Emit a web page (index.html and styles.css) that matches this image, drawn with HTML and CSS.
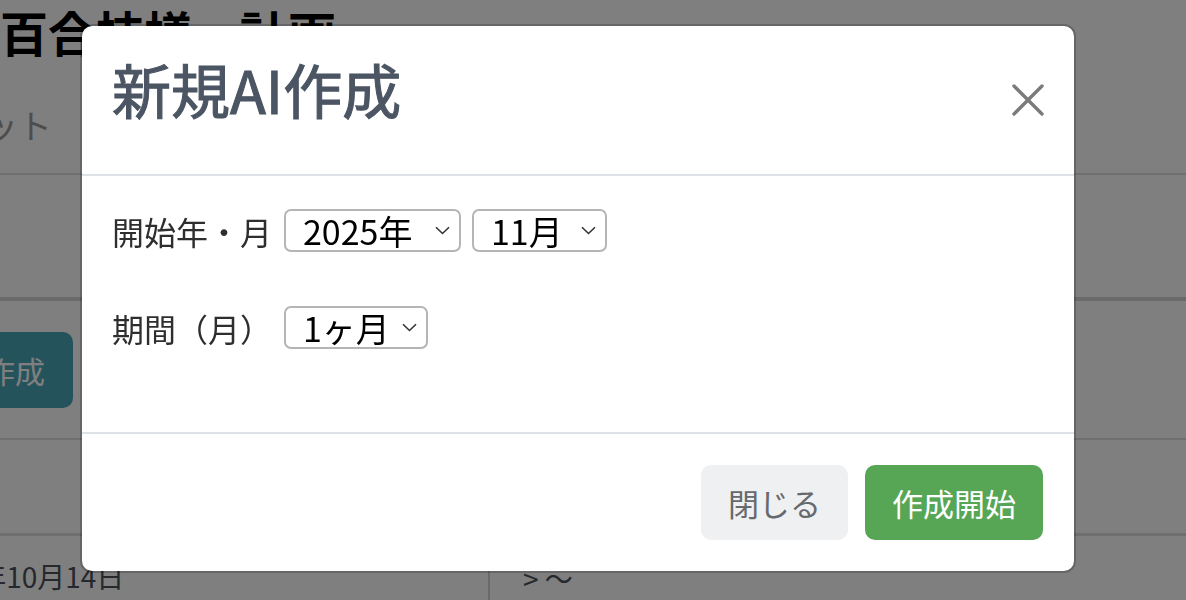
FILE: index.html
```html
<!DOCTYPE html>
<html lang="ja">
<head>
<meta charset="utf-8">
<title>新規AI作成</title>
<link rel="stylesheet" href="styles.css">
</head>
<body>
<div class="page">
  <header class="page-header">
    <h1 class="page-title">百合技様 – 計画</h1>
    <div class="page-sub">ット</div>
  </header>
  <section class="page-tabs"></section>
  <div class="page-actions">
    <button class="btn-teal" type="button">作成</button>
  </div>
  <div class="page-row"></div>
  <div class="page-row page-row-date">
    <div class="cell-date">2025年10月14日</div>
    <div class="cell-range">&gt; 〜</div>
  </div>
</div>

<div class="backdrop"></div>

<div class="modal" role="dialog" aria-labelledby="modal-title">
  <div class="modal-header">
    <h5 class="modal-title" id="modal-title">新規AI作成</h5>
    <button class="modal-close" type="button" aria-label="閉じる">
      <svg width="32" height="32" viewBox="0 0 32 32">
        <path d="M2 2 L30 30 M30 2 L2 30" stroke="#7b7b7b" stroke-width="3.4" stroke-linecap="round" fill="none"/>
      </svg>
    </button>
  </div>
  <div class="modal-body">
    <div class="form-row">
      <span class="form-label">開始年・月</span>
      <div class="select select-year"><span>2025年</span>
        <svg class="chev" width="15" height="9" viewBox="0 0 15 9"><path d="M1 1.2 L7.5 7.5 L14 1.2" stroke="#333" stroke-width="1.6" fill="none"/></svg>
      </div>
      <div class="select select-month"><span>11月</span>
        <svg class="chev" width="15" height="9" viewBox="0 0 15 9"><path d="M1 1.2 L7.5 7.5 L14 1.2" stroke="#333" stroke-width="1.6" fill="none"/></svg>
      </div>
    </div>
    <div class="form-row">
      <span class="form-label">期間（月）</span>
      <div class="select select-period"><span>1ヶ月</span>
        <svg class="chev" width="15" height="9" viewBox="0 0 15 9"><path d="M1 1.2 L7.5 7.5 L14 1.2" stroke="#333" stroke-width="1.6" fill="none"/></svg>
      </div>
    </div>
  </div>
  <div class="modal-footer">
    <button class="btn btn-secondary" type="button">閉じる</button>
    <button class="btn btn-primary" type="button">作成開始</button>
  </div>
</div>
</body>
</html>
```

FILE: styles.css
```css
html, body {
  margin: 0;
  padding: 0;
}

body {
  width: 1186px;
  height: 600px;
  overflow: hidden;
  background: #ffffff;
  font-family: "Noto Sans CJK JP", "Noto Sans", sans-serif;
  color: #212529;
}

/* ---------- background page ---------- */
.page {
  width: 1186px;
  overflow: hidden;
}

.page-header {
  height: 173px;
  border-bottom: 2px solid #dedede;
  box-sizing: content-box;
}

.page-title {
  margin: 0;
  font-size: 48px;
  font-weight: 700;
  line-height: 62px;
  color: #000;
  white-space: nowrap;
}

.page-sub {
  margin-top: 43px;
  margin-left: -16px;
  font-size: 34px;
  line-height: 40px;
  color: #9b9b9b;
}

.page-tabs {
  height: 122px;
  border-bottom: 4px solid #d4d4d4;
}

.page-actions {
  padding: 31px 0 30px;
  border-bottom: 2px solid #dedede;
}

.btn-teal {
  display: block;
  height: 76px;
  margin-left: -43px;
  padding: 0 28px;
  border: none;
  border-radius: 10px;
  background: #4aa6b8;
  color: #ffffff;
  font-family: inherit;
  font-size: 30px;
}

.page-row {
  height: 93px;
  border-bottom: 3px solid #dedede;
}

.page-row-date {
  display: flex;
  height: 64px;
  border-bottom: none;
}

.cell-date {
  width: 572px;
  margin-left: -84px;
  padding-top: 20px;
  font-size: 28px;
  line-height: 40px;
  color: #4a5058;
  white-space: nowrap;
}

.cell-range {
  border-left: 2px solid #d4d4d4;
  padding: 22px 0 0 33px;
  font-size: 28px;
  line-height: 40px;
  color: #4a5058;
}

.backdrop {
  position: fixed;
  inset: 0;
  background: rgba(0, 0, 0, 0.5);
}

/* ---------- modal ---------- */
.modal {
  position: fixed;
  left: 80px;
  top: 24px;
  width: 996px;
  box-sizing: border-box;
  background: #ffffff;
  border: 2px solid rgba(0, 0, 0, 0.2);
  border-radius: 12px;
  background-clip: padding-box;
}

.modal-header {
  display: flex;
  align-items: center;
  justify-content: space-between;
  height: 148px;
  padding: 0 30px;
  border-bottom: 2px solid #dee2e6;
  box-sizing: content-box;
}

.modal-title {
  margin: 0;
  padding-bottom: 22px;
  font-size: 59px;
  font-weight: 400;
  -webkit-text-stroke: 1.1px #4b5563;
  line-height: 1.2;
  color: #4b5563;
}

.modal-close {
  display: flex;
  padding: 0;
  margin: 0;
  border: none;
  background: none;
}

.modal-body {
  padding: 33px 30px 83px;
}

.form-row {
  display: flex;
  align-items: center;
  height: 43px;
}

.form-row + .form-row {
  margin-top: 54px;
}

.form-label {
  width: 160px;
  margin-right: 12px;
  font-size: 32px;
  color: #2e2e2e;
  white-space: nowrap;
}

.select {
  display: flex;
  align-items: center;
  justify-content: space-between;
  height: 43px;
  box-sizing: border-box;
  padding: 0 9px 0 17px;
  margin-right: 11px;
  border: 2px solid #b5b5b5;
  border-radius: 7px;
  font-size: 34px;
  line-height: 1;
  color: #000;
}

.select-year { width: 177px; }
.select-month { width: 135px; }
.select-period { width: 144px; }

.chev {
  flex: none;
}

.modal-footer {
  display: flex;
  justify-content: flex-end;
  gap: 17px;
  padding: 31px;
  border-top: 2px solid #dee2e6;
}

.btn {
  height: 75px;
  padding: 0 27px;
  border: none;
  border-radius: 10px;
  font-family: inherit;
  font-size: 31px;
  white-space: nowrap;
}

.btn-secondary {
  background: #eff0f1;
  color: #66696d;
}

.btn-primary {
  background: #56a656;
  color: #ffffff;
}
```
